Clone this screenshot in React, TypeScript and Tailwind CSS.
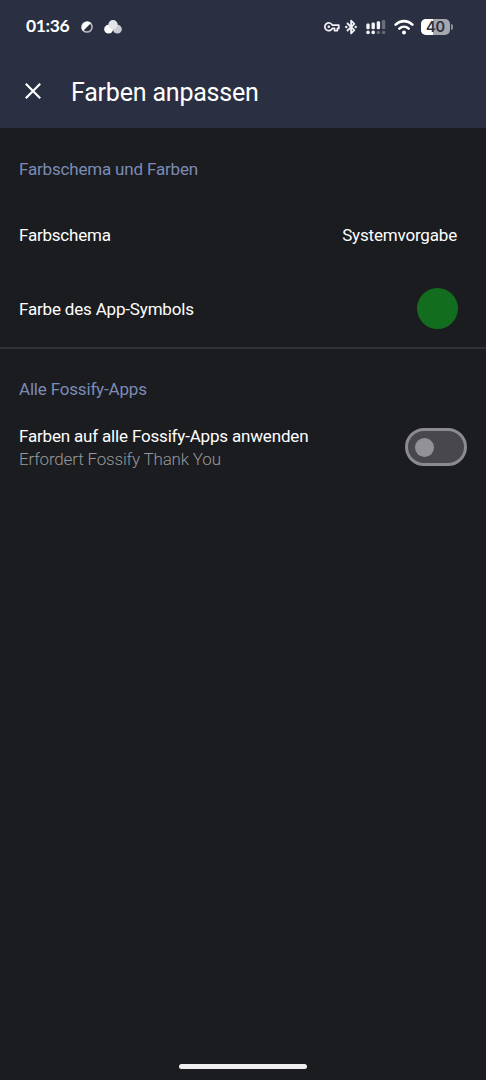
function DataSaverIcon() {
  return (
    <svg width="12" height="12" viewBox="0 0 12 12">
      <circle cx="6" cy="6" r="5.1" fill="none" stroke="#b9bcc4" strokeWidth="1.5" />
      <path d="M2 10A5.7 5.7 0 0 1 10 2Z" fill="#fff" />
    </svg>
  );
}

function CirclesIcon() {
  return (
    <svg width="18" height="14" viewBox="0 0 18 14">
      <circle cx="4.6" cy="9.2" r="4.4" fill="#fff" />
      <circle cx="13.4" cy="9.2" r="4.4" fill="#c9cbd0" />
      <circle cx="9" cy="4.8" r="4.7" fill="#e3e4e8" />
    </svg>
  );
}

function KeyIcon() {
  return (
    <svg width="16" height="10" viewBox="0 0 16 10" fill="none" stroke="#f0f1f4" strokeWidth="1.7" strokeLinejoin="round">
      <path d="M8.3 3.2H14.8V6.4H13.4V8.6H10.5V6.4H8.3A3.9 3.9 0 1 1 8.3 3.2Z" />
      <circle cx="4.8" cy="4.8" r="1.3" fill="#f0f1f4" stroke="none" />
    </svg>
  );
}

function BluetoothIcon() {
  return (
    <svg width="12" height="16" viewBox="0 0 12 16" fill="none" stroke="#f0f1f4" strokeWidth="1.8">
      <path d="M2 4L9.3 11.2L6.1 14.3V1.7L9.3 4.8L2 12" strokeLinejoin="round" />
      <circle cx="1.3" cy="8" r="1.2" fill="#f0f1f4" stroke="none" />
      <circle cx="10.7" cy="8" r="1.2" fill="#f0f1f4" stroke="none" />
    </svg>
  );
}

function SignalIcon() {
  // two SIMs: upper bars grow, lower row is dots
  return (
    <svg width="20" height="15" viewBox="0 0 20 15" fill="#f4f5f7">
      <rect x="0.3" y="3.6" width="3.4" height="5.7" rx="1.3" />
      <rect x="5.5" y="2.4" width="3.4" height="6.9" rx="1.3" />
      <rect x="10.7" y="1.2" width="3.4" height="8.1" rx="1.3" />
      <rect x="15.9" y="0" width="3.4" height="9.3" rx="1.3" fill="#696e7b" />
      <circle cx="2" cy="12.4" r="1.8" />
      <circle cx="7.2" cy="12.4" r="1.8" />
      <circle cx="12.4" cy="12.4" r="1.7" fill="#696e7b" />
      <circle cx="17.6" cy="12.4" r="1.7" fill="#696e7b" />
    </svg>
  );
}

function WifiIcon() {
  return (
    <svg width="20" height="16" viewBox="0 0 20 16" fill="none" stroke="#fff" strokeWidth="2.6" strokeLinecap="round">
      <path d="M1.6 5.6C6.5 0.9 13.5 0.9 18.4 5.6" />
      <path d="M5.3 9.6C8 7.1 12 7.1 14.7 9.6" />
      <circle cx="10" cy="13.4" r="2" fill="#fff" stroke="none" />
    </svg>
  );
}

function Battery({ level }: { level: number }) {
  return (
    <div className="flex items-center gap-px">
      <div className="relative h-4 w-[29px] overflow-hidden rounded-[5px] bg-[#a4a7af]">
        <div className="h-full bg-white" style={{ width: `${level}%` }} />
        <span className="absolute inset-0 text-center font-[Inter] text-[14.5px] leading-4 font-semibold text-[#2c303b]">
          {level}
        </span>
      </div>
      <div className="h-1.5 w-[2px] rounded-r-full bg-[#8d919c]" />
    </div>
  );
}

function StatusBar() {
  return (
    <div className="flex h-[54px] items-center pr-[33px] pl-[26px]">
      <span className="w-[55px] pb-0.5 font-[Lato] text-[17.5px] leading-5 font-bold tracking-[-0.35px] text-white">
        01:36
      </span>
      <DataSaverIcon />
      <div className="ml-[11px]">
        <CirclesIcon />
      </div>
      <div className="ml-auto flex items-center">
        <KeyIcon />
        <div className="ml-[5px]">
          <BluetoothIcon />
        </div>
        <div className="ml-[9px]">
          <SignalIcon />
        </div>
        <div className="mr-[7px] ml-2">
          <WifiIcon />
        </div>
        <Battery level={40} />
      </div>
    </div>
  );
}

function SectionTitle({ children }: { children: string }) {
  return <h2 className="leading-5 text-[#7b8bb5]">{children}</h2>;
}

export default function App() {
  return (
    <div className="flex h-[1080px] w-[486px] flex-col bg-[#1b1c1f] font-[Roboto,sans-serif] text-[17px] tracking-[-0.18px] text-white">
      <header className="h-32 bg-[#2a3042]">
        <StatusBar />
        <div className="flex h-[74px] items-center pl-[25px]">
          <button aria-label="Schließen">
            <svg width="16" height="16" viewBox="0 0 16 16" stroke="#fff" strokeWidth="2.2">
              <path d="M0.8 0.8L15.2 15.2M15.2 0.8L0.8 15.2" />
            </svg>
          </button>
          <h1 className="ml-[30px] pt-[3px] text-[25px] leading-8 tracking-[-0.2px]">Farben anpassen</h1>
        </div>
      </header>

      <section className="h-[221px] border-b-2 border-[#303135] pt-[31px] pr-7 pl-[19px]">
        <SectionTitle>Farbschema und Farben</SectionTitle>
        <div className="mt-[47px] flex h-5 items-center justify-between">
          <span className="tracking-[-0.22px]">Farbschema</span>
          <span className="pr-px">Systemvorgabe</span>
        </div>
        <div className="mt-[42px] flex h-[41px] items-center justify-between">
          <span className="pt-0.5">Farbe des App-Symbols</span>
          <div className="size-[41px] shrink-0 rounded-full bg-[#126e1e]" />
        </div>
      </section>

      <section className="pt-[30px] pr-[19px] pl-[19px]">
        <SectionTitle>Alle Fossify-Apps</SectionTitle>
        <div className="mt-[26px] flex items-center justify-between">
          <div>
            <div className="leading-[23px]">Farben auf alle Fossify-Apps anwenden</div>
            <div className="leading-[23px] font-light text-[#97989a]">Erfordert Fossify Thank You</div>
          </div>
          <button
            role="switch"
            aria-checked="false"
            className="mb-0.5 flex h-[38px] w-[62px] items-center rounded-full border-[3px] border-[#8b8a90] bg-[#48474c] pl-[7px]"
          >
            <span className="size-[19px] rounded-full bg-[#929197]" />
          </button>
        </div>
      </section>

      <div className="mx-auto mt-auto mb-[11px] h-[5px] w-32 rounded-full bg-[#eeefee]" />
    </div>
  );
}
